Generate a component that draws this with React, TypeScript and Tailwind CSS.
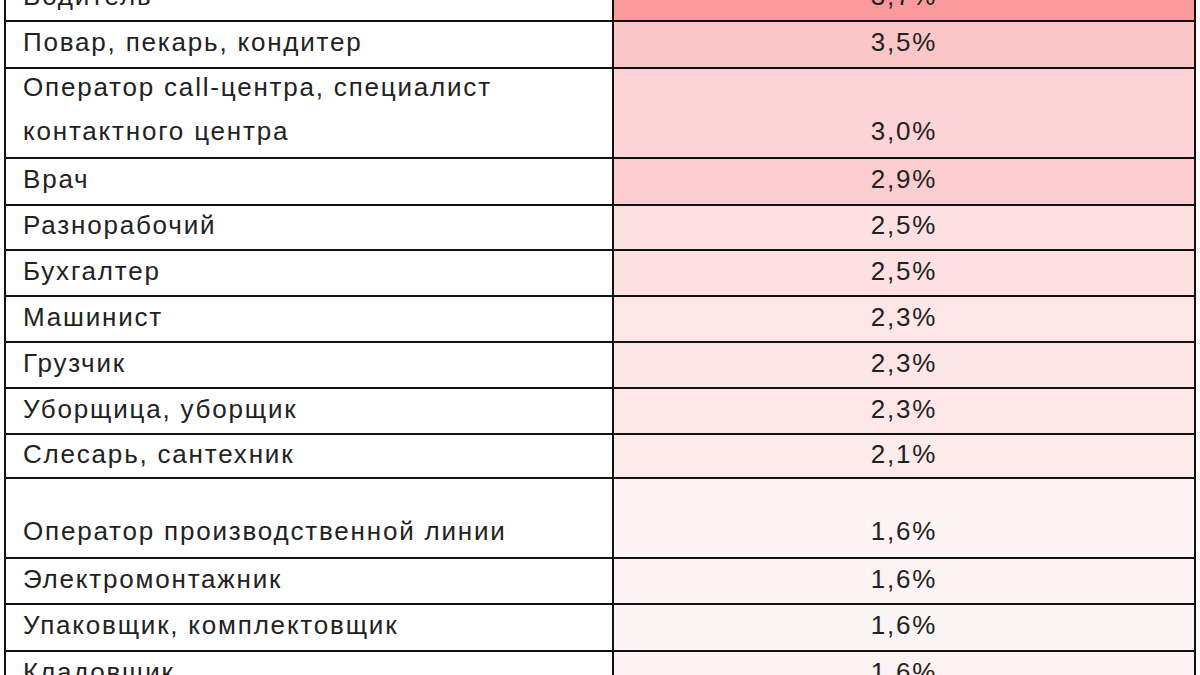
const rows = [
  { name: ["Водитель"], value: "3,7%", bg: "bg-[#fa9a9c]", h: "h-[46px]" },
  { name: ["Повар, пекарь, кондитер"], value: "3,5%", bg: "bg-[#fbc6c8]", h: "h-[47px]" },
  {
    name: ["Оператор call-центра, специалист", "контактного центра"],
    value: "3,0%",
    bg: "bg-[#fcd3d6]",
    h: "h-[90px]",
    bottom: true,
  },
  { name: ["Врач"], value: "2,9%", bg: "bg-[#fccdd0]", h: "h-[47px]" },
  { name: ["Разнорабочий"], value: "2,5%", bg: "bg-[#fde0e2]", h: "h-[45px]" },
  { name: ["Бухгалтер"], value: "2,5%", bg: "bg-[#fde0e1]", h: "h-[46px]" },
  { name: ["Машинист"], value: "2,3%", bg: "bg-[#fde6e7]", h: "h-[46px]" },
  { name: ["Грузчик"], value: "2,3%", bg: "bg-[#fce5e6]", h: "h-[46px]" },
  { name: ["Уборщица, уборщик"], value: "2,3%", bg: "bg-[#fde6e8]", h: "h-[46px]" },
  { name: ["Слесарь, сантехник"], value: "2,1%", bg: "bg-[#fdeaeb]", h: "h-[44px]" },
  {
    name: ["Оператор производственной линии"],
    value: "1,6%",
    bg: "bg-[#fef3f5]",
    h: "h-[80px]",
    bottom: true,
  },
  { name: ["Электромонтажник"], value: "1,6%", bg: "bg-[#fdf3f5]", h: "h-[46px]" },
  { name: ["Упаковщик, комплектовщик"], value: "1,6%", bg: "bg-[#fbf5f6]", h: "h-[47px]" },
  { name: ["Кладовщик"], value: "1,6%", bg: "bg-[#fdf3f5]", h: "h-[46px]" },
];

export default function App() {
  return (
    <div className="w-[1200px] h-[675px] overflow-hidden bg-white">
      <div className="-mt-[24px] ml-[4px] w-[1192px] border-x-2 border-[#111] font-['Liberation_Sans',Arial,sans-serif] text-[26px] tracking-[1.8px] text-[#222]">
        {rows.map((r) => (
          <div key={r.name.join(" ")} className={`flex border-b-2 border-[#111] ${r.h}`}>
            <div
              className={`w-[608px] shrink-0 border-r-2 border-[#111] pl-[17px] flex flex-col leading-[44px] ${
                r.bottom ? "justify-end pb-[4px]" : "justify-center pb-[5px]"
              }`}
            >
              {r.name.map((line) => (
                <span key={line}>{line}</span>
              ))}
            </div>
            <div
              className={`flex-1 flex justify-center leading-[44px] ${r.bg} ${
                r.bottom ? "items-end pb-[4px]" : "items-center pb-[5px]"
              }`}
            >
              {r.value}
            </div>
          </div>
        ))}
      </div>
    </div>
  );
}
